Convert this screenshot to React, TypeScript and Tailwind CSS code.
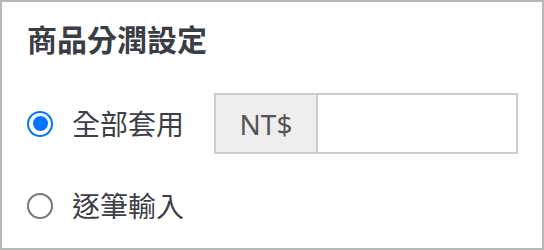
import React from "react";

function Radio({ checked }: { checked?: boolean }) {
  if (checked) {
    return (
      <div className="w-[26px] h-[26px] shrink-0 rounded-full border-[2.5px] border-[#0075ff] flex items-center justify-center">
        <div className="w-[15px] h-[15px] rounded-full bg-[#0075ff]" />
      </div>
    );
  }
  return <div className="w-[26px] h-[26px] shrink-0 rounded-full border-2 border-[#767676]" />;
}

export default function App() {
  return (
    <div
      className="w-[544px] h-[250px] border-2 border-[#b8b8b8] bg-white px-[25px] pt-[23px]"
      style={{ fontFamily: '"Noto Sans", "Noto Sans CJK TC", sans-serif' }}
    >
      <h2 className="text-[30px] leading-[30px] font-bold text-[#3a3e44]">商品分潤設定</h2>

      <div className="mt-[38px] flex items-center h-[61px]">
        <Radio checked />
        <span className="ml-[19px] shrink-0 whitespace-nowrap text-[28px] leading-none text-[#3c4046]">全部套用</span>
        <div className="ml-[30px] shrink-0 flex h-[61px] w-[304px] border-2 border-[#cccccc]">
          <div className="w-[102px] bg-[#eeeeee] border-r-2 border-[#cccccc] flex items-center justify-center text-[28px] text-[#555555]">
            NT$
          </div>
          <input className="flex-1 min-w-0 bg-white outline-none px-3 text-[28px]" />
        </div>
      </div>

      <div className="mt-[39px] flex items-center h-[26px]">
        <Radio />
        <span className="ml-[19px] whitespace-nowrap text-[28px] leading-none text-[#3c4046]">逐筆輸入</span>
      </div>
    </div>
  );
}
